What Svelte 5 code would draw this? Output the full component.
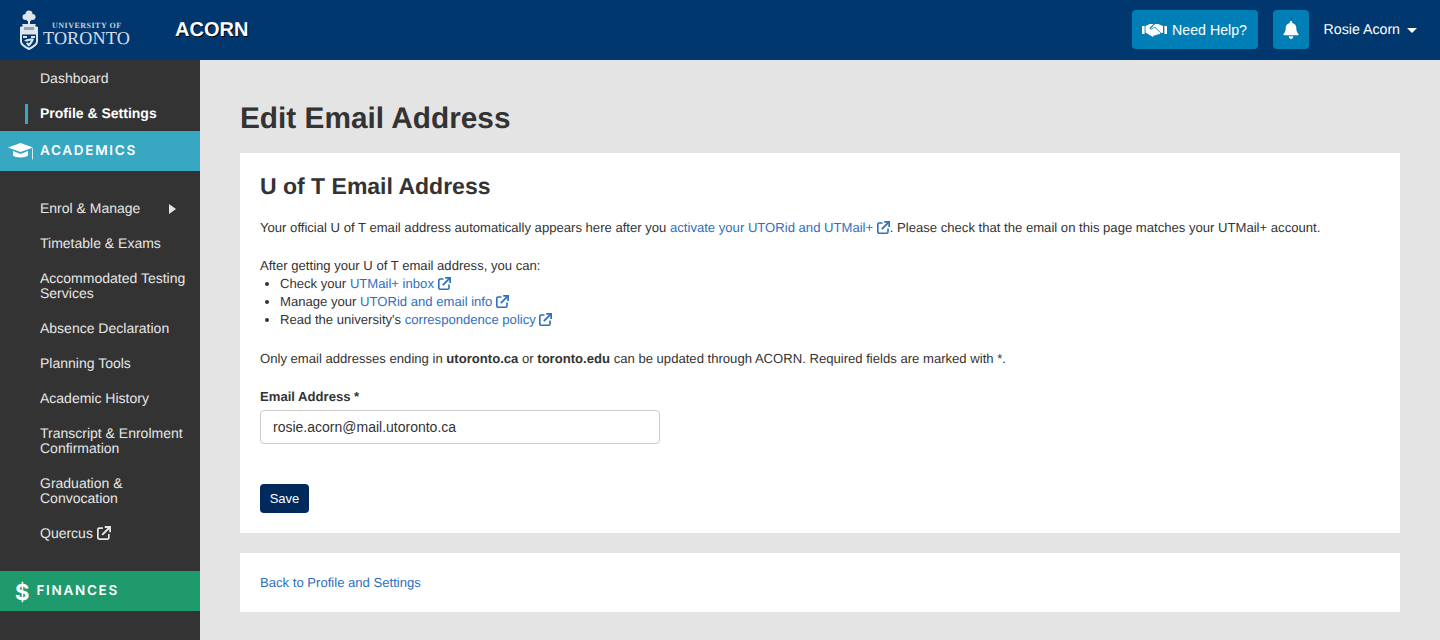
<script>
  const navTop = [
    { label: "Dashboard" },
    { label: "Profile & Settings", active: true }
  ];
  const academics = [
    { label: "Enrol & Manage", arrow: true },
    { label: "Timetable & Exams" },
    { label: "Accommodated Testing Services" },
    { label: "Absence Declaration" },
    { label: "Planning Tools" },
    { label: "Academic History" },
    { label: "Transcript & Enrolment Confirmation" },
    { label: "Graduation & Convocation" },
    { label: "Quercus", external: true }
  ];
</script>

{#snippet ext(size = 13)}
  <svg class="ext" width={size} height={size} viewBox="0 0 13 13" fill="none" stroke="currentColor" stroke-width="1.6" aria-hidden="true">
    <path d="M5.500 2H2A1.200 1.200 0 0 0 .8 3.200v7.800A1.200 1.200 0 0 0 2 12.200h7.800A1.200 1.200 0 0 0 11 11V7.500" />
    <path d="M4.800 8.200 11.600 1.400" stroke-width="1.800" />
    <path d="M7.200.9h5v5" stroke-width="1.800" />
  </svg>
{/snippet}

<header class="topbar">
  <div class="brand">
    <svg class="crest" width="20" height="40" viewBox="0 0 20 40" aria-hidden="true">
      <g fill="#dfe5ec">
        <circle cx="10" cy="4" r="3.500" />
        <circle cx="6.500" cy="7" r="3" />
        <circle cx="13.500" cy="7" r="3" />
        <circle cx="10" cy="9" r="2.500" />
        <rect x="9" y="9" width="2" height="6" />
        <path d="M3 14h14l-1 2 3 1v6H1v-6l3-1z" />
      </g>
      <rect x="5" y="17" width="10" height="3" fill="#8ea4bc" />
      <path d="M2 23.500h16v8c0 3.500-4 5.500-8 7.500-4-2-8-4-8-7.500z" fill="#00376f" stroke="#dfe5ec" stroke-width="2" />
      <path d="M4 26h4v2H4zM12 26h4v2h-4z" fill="#dfe5ec" />
      <path d="M5 31c3-2.500 7-3 10-2-1 3-3 6-5 7.500-1.500-1-2.500-2-3-3.500l3-1z" fill="#dfe5ec" />
      <path d="M8 31.500l4-1-2 3z" fill="#00376f" />
    </svg>
    <div class="wordmark">
      <span class="uni">UNIVERSITY OF</span>
      <span class="tor">TORONTO</span>
    </div>
    <span class="acorn">ACORN</span>
  </div>
  <div class="actions">
    <button class="help">
      <svg width="25" height="14" viewBox="0 0 25 14" fill="#fff" aria-hidden="true">
        <rect x="0" y="3" width="2.600" height="8" />
        <rect x="22.400" y="3" width="2.600" height="8" />
        <path d="M3.500 3 8 1h3.500L8 4.500c-.8 1 .6 2.400 1.900 1.700L12.500 4.500l6 5.500-1.300 1.500-1-.7-1 1.400-1.200-.7-1 1.200-1.200-.5L11 14 3.500 9.500z" />
        <path d="M13 1h3l5 2v6.500l-1.500.8L12.800 3.800 10 5.600c-.6.300-1.200-.2-.8-.7z" />
      </svg>
      <span>Need Help?</span>
    </button>
    <button class="bell" aria-label="Notifications">
      <svg width="16" height="18" viewBox="0 0 16 18" fill="#fff" aria-hidden="true">
        <path d="M8 0c-.7 0-1.200.5-1.200 1.200v.7C4.200 2.400 2.700 4.500 2.700 7c0 3.300-1 4.700-2.200 6-.4.5-.1 1.200.6 1.200h13.800c.7 0 1-.7.6-1.200-1.200-1.300-2.200-2.700-2.200-6 0-2.500-1.500-4.600-4.100-5.100v-.7C9.200.5 8.700 0 8 0z" />
        <path d="M5.800 15.300h4.400C10.200 16.700 9.200 18 8 18s-2.200-1.300-2.200-2.700z" />
      </svg>
    </button>
    <div class="user">Rosie Acorn <span class="caret"></span></div>
  </div>
</header>

<div class="layout">
  <nav class="sidebar">
    <ul class="nav-list top">
      {#each navTop as item}
        <li class="nav-item" class:active={item.active}>{item.label}</li>
      {/each}
    </ul>
    <div class="band academics">
      <svg width="26" height="18" viewBox="0 0 26 18" fill="#fff" aria-hidden="true">
        <path d="M12.500 1 0 5.500l12.500 4.500 12.500-4.500z" />
        <path d="M5 9v4.500c2 2.500 13 2.500 15 0V9l-7.500 3z" />
        <rect x="24.200" y="6.500" width="0.800" height="11" />
      </svg>
      <span>ACADEMICS</span>
    </div>
    <ul class="nav-list sub">
      {#each academics as item}
        <li class="nav-item">
          <span>
            {item.label}
            {#if item.external}{@render ext(14)}{/if}
          </span>
          {#if item.arrow}<i class="arrow"></i>{/if}
        </li>
      {/each}
    </ul>
    <div class="band finances">
      <span class="dollar">$</span>
      <span>FINANCES</span>
    </div>
  </nav>

  <main class="content">
    <h1>Edit Email Address</h1>
    <section class="card">
      <h2>U of T Email Address</h2>
      <p>
        Your official U of T email address automatically appears here after you
        <a href="#top">activate your UTORid and UTMail+ {@render ext()}</a>. Please check that the email on this page matches your UTMail+ account.
      </p>
      <p class="lead">After getting your U of T email address, you can:</p>
      <ul class="links">
        <li>Check your <a href="#top">UTMail+ inbox {@render ext()}</a></li>
        <li>Manage your <a href="#top">UTORid and email info {@render ext()}</a></li>
        <li>Read the university's <a href="#top">correspondence policy {@render ext()}</a></li>
      </ul>
      <p>
        Only email addresses ending in <b>utoronto.ca</b> or <b>toronto.edu</b> can be updated through ACORN. Required fields are marked with *.
      </p>
      <label for="email">Email Address *</label>
      <input id="email" type="text" value="rosie.acorn@mail.utoronto.ca" />
      <button class="save">Save</button>
    </section>
    <section class="card back">
      <a href="#top">Back to Profile and Settings</a>
    </section>
  </main>
</div>

<style>
  :global(body) {
    font-family: "Liberation Sans", Arial, sans-serif;
    font-size: 13.100px;
    color: #333;
    background: #e4e4e4;
    overflow: hidden;
    text-rendering: geometricPrecision;
  }
  .topbar {
    height: 60px;
    background: #00376f;
    display: flex;
    align-items: center;
    justify-content: space-between;
    padding: 0 22px 0 19px;
  }
  .brand {
    display: flex;
    align-items: center;
  }
  .crest {
    margin-right: 4px;
  }
  .wordmark {
    display: flex;
    flex-direction: column;
    font-family: "Liberation Serif", serif;
    color: #d5dde6;
    width: 88px;
    margin: 8px 44px 0 0;
  }
  .uni {
    font-size: 8px;
    line-height: 10px;
    letter-spacing: 0.5px;
    margin-left: 9px;
    font-weight: bold;
    white-space: nowrap;
    color: #c5d0dc;
  }
  .tor {
    font-size: 18.200px;
    line-height: 18px;
    letter-spacing: 0.1px;
    margin-top: -2px;
  }
  .acorn {
    color: #fff;
    font-size: 20px;
    font-weight: bold;
    text-shadow: 1px 1px 0 #000;
  }
  .actions {
    display: flex;
    align-items: center;
    padding-right: 1px;
  }
  .help,
  .bell {
    height: 39px;
    margin-bottom: 1px;
    background: #007fb6;
    border: 0;
    border-radius: 4px;
    color: #fff;
    font: 14.200px "Liberation Sans", Arial, sans-serif;
    display: flex;
    align-items: center;
    justify-content: center;
    padding: 0;
  }
  .help {
    width: 126px;
    gap: 5px;
    margin-right: 15px;
  }
  .bell {
    width: 36px;
    margin-right: 15px;
  }
  .user {
    color: #fff;
    font-size: 14.200px;
    display: flex;
    align-items: center;
    gap: 7px;
  }
  .caret {
    border: 5.500px solid transparent;
    border-top-color: #fff;
    border-bottom: 0;
  }
  .layout {
    display: flex;
    height: 580px;
  }
  .sidebar {
    width: 200px;
    flex: none;
    background: #333;
    color: #e6e6e6;
  }
  .nav-list {
    list-style: none;
    margin: 0;
    padding: 0;
  }
  .nav-list.top {
    padding-top: 1px;
  }
  .nav-list.sub {
    padding: 20px 0;
  }
  .nav-item {
    position: relative;
    padding: 10px 10px 10px 40px;
    font-size: 14px;
    line-height: 15px;
    display: flex;
    align-items: center;
    justify-content: space-between;
  }
  .nav-item.active {
    color: #fff;
    font-weight: bold;
  }
  .nav-item.active::before {
    content: "";
    position: absolute;
    left: 25px;
    top: 8px;
    width: 3px;
    height: 20px;
    background: #37a7c2;
  }
  .arrow {
    border: 5px solid transparent;
    border-left: 7px solid #e6e6e6;
    border-right: 0;
    margin-right: 14px;
  }
  .band {
    height: 40px;
    box-sizing: border-box;
    padding-bottom: 1px;
    display: flex;
    align-items: center;
    color: #fff;
    font-family: Inter, sans-serif;
    font-weight: 600;
    font-size: 13.500px;
    letter-spacing: 1.700px;
  }
  .academics {
    background: #37a7c2;
    padding-left: 8px;
    gap: 6px;
  }
  .finances {
    background: #1f9a6d;
    padding-left: 15px;
    gap: 7px;
  }
  .dollar {
    font-size: 22px;
    font-weight: 700;
    letter-spacing: 0;
    line-height: 24px;
    margin-top: 4px;
  }
  .content {
    flex: 1;
    padding: 40px;
  }
  h1 {
    margin: 1px 0 16px;
    font-size: 29.800px;
    line-height: 36px;
    font-weight: bold;
    color: #333;
  }
  .card {
    background: #fff;
    padding: 20px;
    margin-bottom: 20px;
  }
  h2 {
    margin: 0 0 20px;
    font-size: 23px;
    line-height: 26px;
    font-weight: bold;
  }
  p {
    margin: 0 0 20px;
    line-height: 18px;
  }
  p.lead {
    margin: 0;
  }
  .links {
    margin: 0 0 21px;
    padding: 0 0 0 20px;
    line-height: 18px;
  }
  a {
    color: #2f6fbd;
    text-decoration: none;
  }
  .ext {
    vertical-align: -2px;
  }
  label {
    display: block;
    font-weight: bold;
    line-height: 18px;
    margin-bottom: 4px;
  }
  input {
    display: block;
    box-sizing: border-box;
    width: 400px;
    height: 34px;
    border: 1px solid #ccc;
    border-radius: 4px;
    padding: 0 12px;
    font: 14px "Liberation Sans", Arial, sans-serif;
    color: #333;
    margin-bottom: 40px;
  }
  .save {
    display: block;
    width: 49px;
    height: 29px;
    padding: 0;
    border: 0;
    border-radius: 4px;
    background: #002a5c;
    color: #fff;
    font: 13px "Liberation Sans", Arial, sans-serif;
  }
  .back {
    margin: 0;
    line-height: 19px;
  }
</style>
